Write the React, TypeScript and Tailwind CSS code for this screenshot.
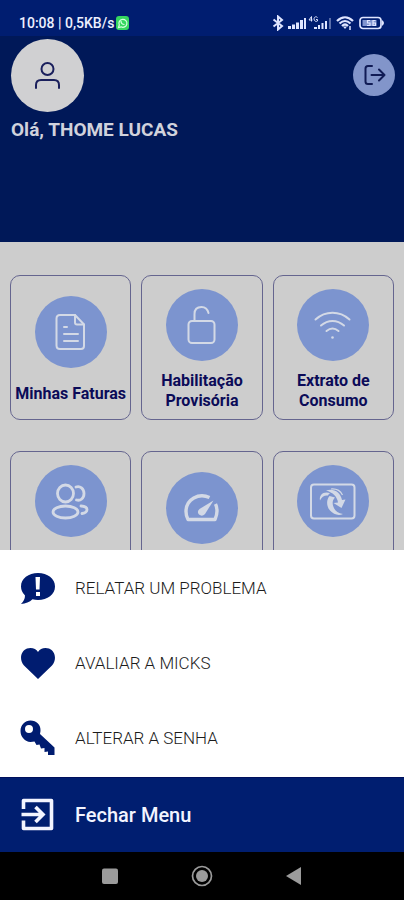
import type { ReactNode } from "react";

function StatusIcons() {
  return (
    <div className="flex items-center gap-1 text-[#dfe5ff]">
      <svg width="12" height="16" viewBox="0 0 12 16" fill="none" stroke="currentColor" strokeWidth="2" aria-hidden="true">
        <path d="M1.500 4.500 10 11l-4 3.500v-13L10 5l-8.500 6.500" />
      </svg>
      <svg width="44" height="16" viewBox="0 0 44 16" fill="currentColor" aria-hidden="true">
        <path d="M0 11h3v3H0zM4 9.500h3V14H4zM8 7.500h3V14H8zM12 5h3v9h-3zM16 3h2v11h-2z" />
        <path d="M26 12h3v2h-3zM30 10h2v4h-2zM33.500 8h2v6h-2zM37 6h2v8h-2z" />
        <path d="M41 3h2v11h-2z" opacity=".4" />
        <path d="M23.500 6.500v-5L21 5h3.500M29.500 2.500C28 1 26 2 26 4s2 3 3.500 2V4.500H28" fill="none" stroke="currentColor" />
      </svg>
      <svg width="18" height="16" viewBox="0 0 18 16" fill="none" stroke="currentColor" strokeWidth="2.200" aria-hidden="true">
        <path d="M1 6c5-5 11-5 16 0M3.500 8.500c4-3.500 7-3.500 11 0M6 11c2-2 4-2 6 0" />
        <path d="M7 11.500h4L9 14z" fill="currentColor" stroke="none" />
        <path d="M14 11v4" strokeWidth="1.500" />
      </svg>
      <svg width="28" height="16" viewBox="0 0 28 16" aria-hidden="true">
        <rect x="2" y="2.500" width="21" height="11" rx="3" fill="none" stroke="currentColor" strokeWidth="1.700" />
        <rect x="4.500" y="5" width="14" height="6" fill="#8094cf" />
        <path d="M24 5q4 3 0 6z" fill="currentColor" />
        <path d="M12 5.500H9.500V8H12v2.500H9M17.500 5.500H15v5h2.500V8H15" fill="none" stroke="currentColor" strokeWidth="1.200" />
      </svg>
    </div>
  );
}

function DocumentIcon() {
  return (
    <svg width="72" height="72" viewBox="0 0 72 72" fill="none" stroke="currentColor" strokeWidth="2" strokeLinecap="round" strokeLinejoin="round" aria-hidden="true">
      <path d="M25 19h15l9 9.500V50q0 3-3 3H25q-3.500 0-3.500-3.500V22.500Q21.500 19 25 19z" />
      <path d="M40 19v7.500q0 2 2 2h7M29 31h3M29 38h14M29 45h14" />
    </svg>
  );
}

function UnlockIcon() {
  return (
    <svg width="72" height="72" viewBox="0 0 72 72" fill="none" stroke="currentColor" strokeWidth="2" strokeLinecap="round" aria-hidden="true">
      <rect x="22.500" y="32" width="26" height="22" rx="3.500" />
      <path d="M28.500 32v-7q0-7 7-7 5.500 0 7 6" />
    </svg>
  );
}

function WifiIcon() {
  return (
    <svg width="72" height="72" viewBox="0 0 72 72" fill="none" stroke="currentColor" strokeWidth="2" strokeLinecap="round" aria-hidden="true">
      <path d="M18.500 30.500c10-9 24-9 34 0M24 36.500c7-6 16-6 23 0M29.500 42q6-5 12 0" />
      <circle cx="35.500" cy="48.500" r="1.300" fill="currentColor" stroke="none" />
    </svg>
  );
}

function PeopleIcon() {
  return (
    <svg width="72" height="72" viewBox="0 0 72 72" fill="none" stroke="currentColor" strokeWidth="2.800" strokeLinecap="round" strokeLinejoin="round" aria-hidden="true">
      <ellipse cx="30.500" cy="28.500" rx="8" ry="8.500" />
      <ellipse cx="30.500" cy="47" rx="12.500" ry="6" />
      <path d="M41 22c4-1.500 8 1.500 8 6.500s-3.500 7.500-7.500 6.500M46 41c3.500.300 6 1.500 6 3.500s-2 3.500-5 4" />
    </svg>
  );
}

function GaugeIcon() {
  return (
    <svg width="72" height="72" viewBox="0 0 72 72" fill="none" stroke="currentColor" strokeWidth="3.400" strokeLinejoin="round" aria-hidden="true">
      <path d="M43.500 25.500C33 20.500 20 27 20 39.500q0 4.500 2 8h27q2-4.500 2-8.500t-1.500-7" />
      <path d="M47.500 28.500 33.500 37q-3 3-.500 5.500 3 2.500 6-.500z" fill="currentColor" stroke="none" />
    </svg>
  );
}

function TvIcon() {
  return (
    <svg width="72" height="72" viewBox="0 0 72 72" fill="none" stroke="currentColor" aria-hidden="true">
      <rect x="14" y="19.500" width="43.500" height="34" rx="3" strokeWidth="2" />
      <path d="M23 35.500C22 29.500 26.500 26 33 28c-1 1-1.500 1.500-2 2.500-3.500-.500-6.500 1.500-8 5z" fill="currentColor" stroke="none" />
      <path d="M29 25.500c8-2.500 14.500 2 16 9.500l3.500-.500-4 8.500-8-5 4.500-.500c-1-6-5-10-12-12z" fill="currentColor" stroke="none" />
      <path d="M32.500 31c-3.500 4-3 10.500.500 14.500s8.500 5.500 13 3.500c-5-.500-8-3-9.500-7-1.500-3.500-1-7 1.500-9.500z" fill="currentColor" stroke="none" />
      <path d="M34 24c6-.500 9.500 2 11.500 6" strokeWidth="1.200" />
    </svg>
  );
}

type Service = { name: string; label?: ReactNode; icon: ReactNode; lower?: boolean };

const services: Service[] = [
  { name: "Minhas Faturas", label: "Minhas Faturas", icon: <DocumentIcon />, lower: true },
  { name: "Habilitação Provisória", label: <>Habilitação<br />Provisória</>, icon: <UnlockIcon /> },
  { name: "Extrato de Consumo", label: <>Extrato de<br />Consumo</>, icon: <WifiIcon /> },
  { name: "Clientes", icon: <PeopleIcon /> },
  { name: "Velocidade", icon: <GaugeIcon />, lower: true },
  { name: "TV", icon: <TvIcon /> },
];

function ServiceCard({ service }: { service: Service }) {
  return (
    <button
      type="button"
      aria-label={service.name}
      className={`flex h-[145px] flex-col items-center rounded-[10px] border border-[#65658f] text-[#0b0b58] ${service.lower ? "gap-4 pt-5" : "gap-2.5 pt-[13px]"}`}
    >
      <span className="size-[72px] shrink-0 rounded-full bg-[#7c94cf] text-[#d3d9e6]">{service.icon}</span>
      {service.label && <span className="text-center text-base leading-5 font-bold whitespace-nowrap">{service.label}</span>}
    </button>
  );
}

function MenuItem({ children, icon }: { children: ReactNode; icon: ReactNode }) {
  return (
    <li>
      <button type="button" className="flex h-[75px] w-full items-center gap-5 px-5 text-left text-[17px] font-light text-[#1c1c1c]">
        <span className="text-[#001c70]">{icon}</span>
        <span className="pt-0.5">{children}</span>
      </button>
    </li>
  );
}

export default function App() {
  return (
    <div className="flex h-screen flex-col overflow-hidden bg-[#cdcdcd] font-['Roboto','Liberation_Sans',sans-serif]">
      <div className="flex h-9 shrink-0 items-end justify-between bg-[#001d70] pr-[18px] pb-[5px] pl-[19px]">
        <div className="flex items-center gap-0.5 text-sm leading-4 font-medium text-[#edf0ff]">
          <span>10:08 | 0,5KB/s</span>
          <svg width="13" height="14" viewBox="0 0 13 14" aria-hidden="true">
            <rect width="13" height="14" rx="3" fill="#35d75f" />
            <path d="m2.500 11.500.800-2.500a4 4 0 1 1 1.700 1.800z" fill="none" stroke="#d6ffdf" strokeWidth="1.200" />
            <path d="M5 5c0 2.500 1.500 3.500 3.500 3.500" fill="none" stroke="#d6ffdf" strokeWidth="1.200" />
          </svg>
        </div>
        <StatusIcons />
      </div>

      <header className="flex h-[206px] shrink-0 items-start justify-between bg-[#001858] pt-[3px] pr-[9px] pl-[11px]">
        <div>
          <div className="size-[73px] rounded-full bg-[#d0d0d2] text-[#1a1f5c]">
            <svg width="73" height="73" viewBox="0 0 73 73" fill="none" stroke="currentColor" strokeWidth="2" strokeLinecap="round" aria-hidden="true">
              <circle cx="36.500" cy="30" r="6" />
              <path d="M25 49v-3q0-5 5-5h13q5 0 5 5v3" />
            </svg>
          </div>
          <h1 className="pt-1.5 text-[19px] leading-6 font-bold text-[#d0d2dc]">Olá, THOME LUCAS</h1>
        </div>
        <button type="button" aria-label="Sair" className="mt-[15px] size-[42px] rounded-full bg-[#8295ca] text-[#101b55]">
          <svg width="42" height="42" viewBox="0 0 42 42" fill="none" stroke="currentColor" strokeWidth="2" strokeLinecap="round" strokeLinejoin="round" aria-hidden="true">
            <path d="M19 12h-4q-2.500 0-2.500 2.500v13q0 2.500 2.500 2.500h4" />
            <path d="M18.500 21H31.500M26 15.500l5.500 5.500-5.500 5.500" />
          </svg>
        </button>
      </header>

      <main className="min-h-0 flex-1 overflow-hidden px-2.5 pt-[33px]">
        <div className="grid grid-cols-3 gap-x-2.5 gap-y-[31px]">
          {services.map((service) => (
            <ServiceCard key={service.name} service={service} />
          ))}
        </div>
      </main>

      <div className="shrink-0">
        <ul className="bg-white pb-0.5">
          <MenuItem
            icon={
              <svg width="35" height="32" viewBox="0 0 35 32" fill="currentColor" aria-hidden="true">
                <path d="M18 1c9.500 0 17 5.500 17 13.500S27.500 28 18 28q-3 0-5.500-.800Q8 31.500 1 32q4-4 4-8.500-4-4-4-9C1 6.500 8.500 1 18 1z" />
                <path d="M15.500 5h4.500l-.500 12.500h-3.500zM16 20h4v4h-4z" fill="white" />
              </svg>
            }
          >
            RELATAR UM PROBLEMA
          </MenuItem>
          <MenuItem
            icon={
              <svg width="35" height="32" viewBox="0 0 35 32" fill="currentColor" aria-hidden="true">
                <path d="M18 32 4 18.500C-1 13 .500 4 7 1.500 11.500 0 16 1.500 18 5c2-3.500 6.500-5 11-3.500C35.500 4 37 13 32 18.500z" />
              </svg>
            }
          >
            AVALIAR A MICKS
          </MenuItem>
          <MenuItem
            icon={
              <svg width="35" height="36" viewBox="0 0 35 36" fill="currentColor" aria-hidden="true">
                <path fillRule="evenodd" d="M10.500.500C16.500.500 21 5 20.500 11l-.500 3L34.500 27.500V35H28v-3.500l-3.500.500v-4l-3.500.500-1.500-4-3 .500-2-3.500-4 .500C5 21.500.500 17 .500 11S5 .500 10.500.500zM9 5a4 4 0 1 0 0 8 4 4 0 0 0 0-8z" />
              </svg>
            }
          >
            ALTERAR A SENHA
          </MenuItem>
        </ul>
        <button type="button" className="flex h-[75px] w-full items-center gap-5 border-t border-[#00105c] bg-[#001e70] px-5 text-left text-xl font-medium text-[#f2f4ff]">
          <svg width="35" height="34" viewBox="0 0 35 34" fill="none" stroke="currentColor" strokeWidth="3.600" strokeLinejoin="round" aria-hidden="true">
            <path d="M3.500 11V2.500H31.500v28H3.500v-8" />
            <path d="M1.500 16.500H22M15.500 9l7.500 7.500-7.500 7.500" strokeLinejoin="miter" />
          </svg>
          <span>Fechar Menu</span>
        </button>
        <nav aria-label="Sistema" className="flex h-12 items-center justify-center gap-[70px] bg-black text-[#9b9b9b]">
          <button type="button" aria-label="Recentes">
            <svg width="22" height="22" viewBox="0 0 22 22" fill="currentColor" aria-hidden="true"><rect x="3" y="3.500" width="16" height="15.500" rx="2" /></svg>
          </button>
          <button type="button" aria-label="Início">
            <svg width="22" height="22" viewBox="0 0 22 22" fill="currentColor" aria-hidden="true"><circle cx="11" cy="11" r="9.500" fill="none" stroke="currentColor" strokeWidth="1.700" /><circle cx="11" cy="11" r="6" /></svg>
          </button>
          <button type="button" aria-label="Voltar">
            <svg width="22" height="22" viewBox="0 0 22 22" fill="currentColor" aria-hidden="true"><path d="M3 11 18 2v18z" /></svg>
          </button>
        </nav>
      </div>
    </div>
  );
}
